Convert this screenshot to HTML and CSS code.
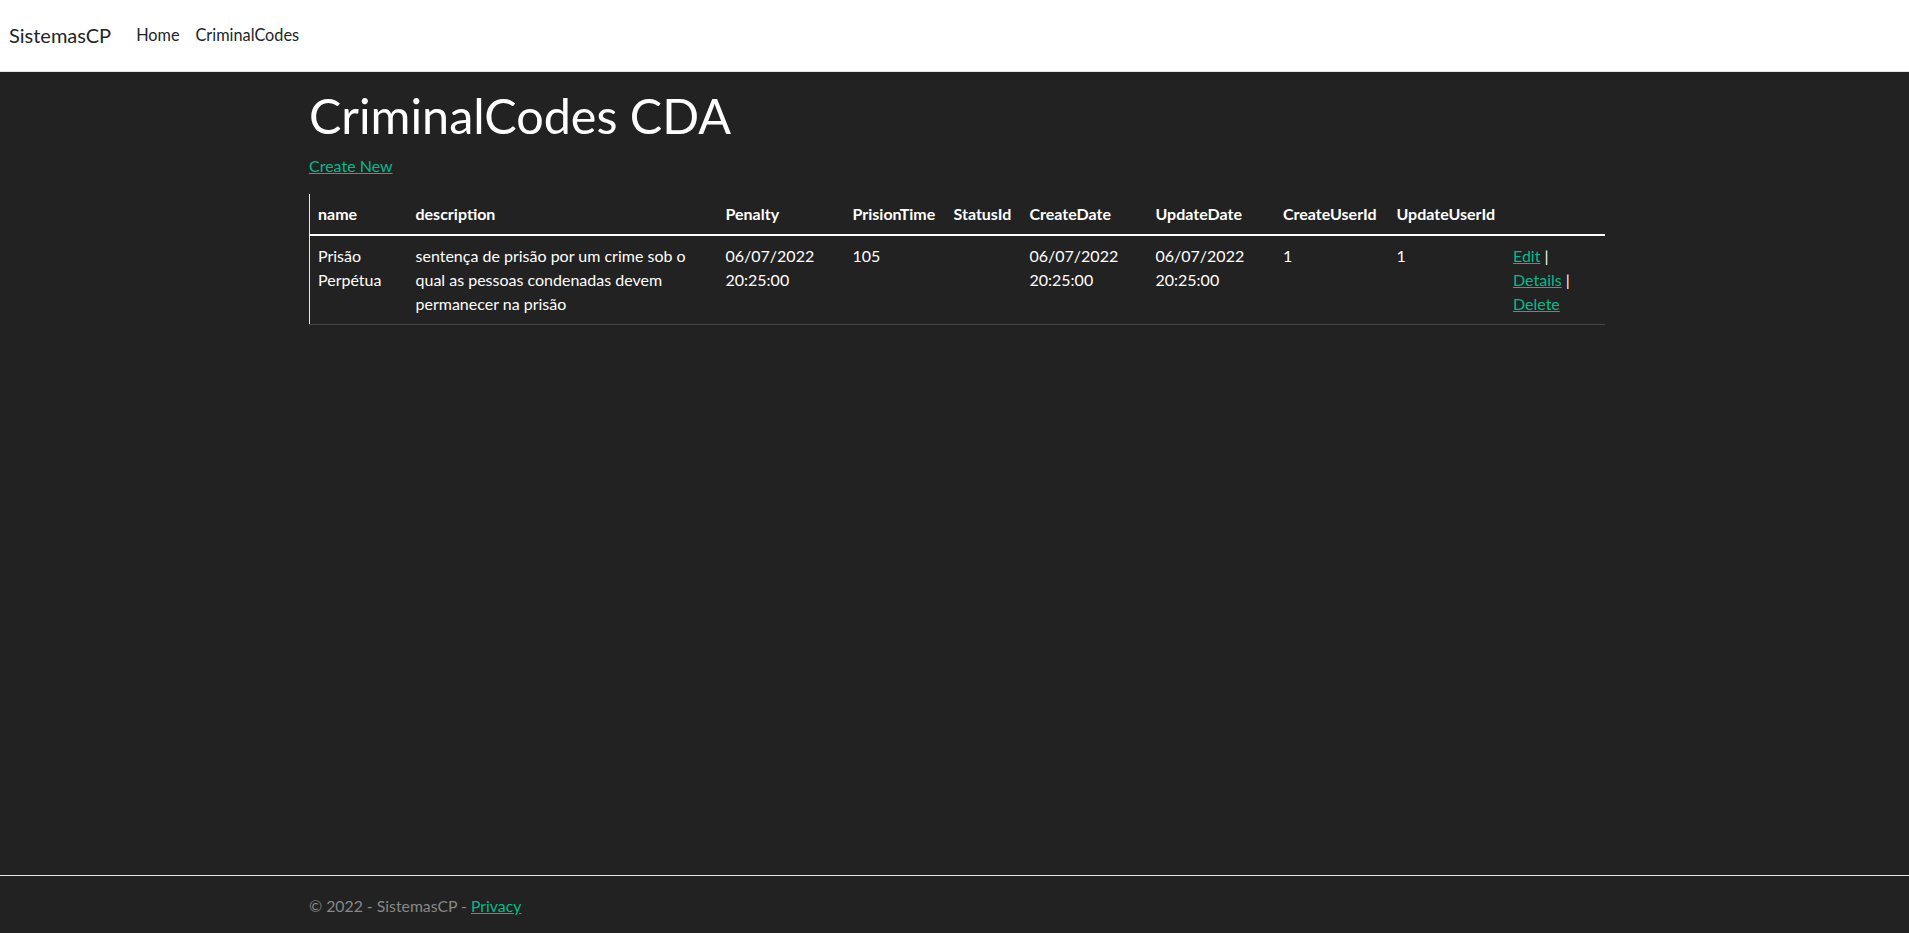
FILE: index.html
```html
<!DOCTYPE html>
<html lang="pt">
<head>
<meta charset="utf-8">
<title>CriminalCodes CDA - SistemasCP</title>
<link rel="stylesheet" href="styles.css">
</head>
<body>
<header class="navbar">
  <a class="brand" href="#">SistemasCP</a>
  <nav class="nav">
    <a class="nav-link" href="#">Home</a>
    <a class="nav-link" href="#">CriminalCodes</a>
  </nav>
</header>
<main class="main">
  <div class="container">
    <h1 class="title">CriminalCodes CDA</h1>
    <p class="create"><a href="#">Create New</a></p>
    <table class="table">
      <colgroup>
        <col class="c-name">
        <col class="c-desc">
        <col class="c-pen">
        <col class="c-time">
        <col class="c-status">
        <col class="c-cdate">
        <col class="c-udate">
        <col class="c-cuser">
        <col class="c-uuser">
        <col class="c-act">
      </colgroup>
      <thead>
        <tr>
          <th>name</th>
          <th>description</th>
          <th>Penalty</th>
          <th>PrisionTime</th>
          <th>StatusId</th>
          <th>CreateDate</th>
          <th>UpdateDate</th>
          <th>CreateUserId</th>
          <th>UpdateUserId</th>
          <th></th>
        </tr>
      </thead>
      <tbody>
        <tr>
          <td>Prisão Perpétua</td>
          <td>sentença de prisão por um crime sob o qual as pessoas condenadas devem permanecer na prisão</td>
          <td>06/07/2022 20:25:00</td>
          <td>105</td>
          <td></td>
          <td>06/07/2022 20:25:00</td>
          <td>06/07/2022 20:25:00</td>
          <td>1</td>
          <td>1</td>
          <td><a href="#">Edit</a> |<br><a href="#">Details</a> |<br><a href="#">Delete</a></td>
        </tr>
      </tbody>
    </table>
  </div>
</main>
<footer class="footer">
  <div class="container">&copy; 2022 - SistemasCP - <a href="#">Privacy</a></div>
</footer>
</body>
</html>
```

FILE: styles.css
```css
html, body {
  margin: 0;
  padding: 0;
}
body {
  min-height: 100vh;
  display: flex;
  flex-direction: column;
  background: #222222;
  color: #ffffff;
  font-family: Lato, "Open Sans", "Liberation Sans", sans-serif;
  font-size: 16px;
  line-height: 1.5;
}
a {
  color: #00bc8c;
  text-decoration: underline;
}
.navbar {
  height: 72px;
  box-sizing: border-box;
  background: #ffffff;
  border-bottom: 1px solid #e5e5e5;
  display: flex;
  align-items: center;
  padding: 0 8px 1px 9px;
  flex-shrink: 0;
}
.brand {
  color: #212529;
  font-size: 20px;
  line-height: 30px;
  text-decoration: none;
  margin-right: 17px;
}
.nav {
  display: flex;
}
.nav-link {
  color: #212529;
  font-size: 16.3px;
  text-decoration: none;
  padding: 8px;
  line-height: 24px;
}
.main {
  flex: 1;
  padding-top: 14px;
}
.container {
  max-width: 1296px;
  margin: 0 auto;
  padding: 0 9.5px 0 14.5px;
}
.title {
  font-size: 48.5px;
  font-weight: 400;
  line-height: 1.2;
  margin: 0 0 10px;
}
.create {
  margin: 0 0 16px;
}
.table {
  width: 100%;
  border-collapse: collapse;
  table-layout: fixed;
  border-left: 1px solid #e6e6e6;
}
.c-name { width: 98px; }
.c-desc { width: 310px; }
.c-pen { width: 127px; }
.c-time { width: 101px; }
.c-status { width: 76px; }
.c-cdate { width: 126px; }
.c-udate { width: 127.5px; }
.c-cuser { width: 113.5px; }
.c-uuser { width: 116.5px; }
.c-act { width: auto; }
.table th,
.table td {
  padding: 8px;
  text-align: left;
  vertical-align: top;
}
.table th {
  font-weight: 700;
  border-bottom: 2px solid #ffffff;
}
.table td {
  border-bottom: 1px solid #444444;
}
.footer {
  height: 58px;
  box-sizing: border-box;
  overflow: hidden;
  border-top: 1px solid #e6e6e6;
  color: #888888;
  font-size: 15.8px;
  line-height: 60px;
  white-space: nowrap;
  flex-shrink: 0;
}
```
